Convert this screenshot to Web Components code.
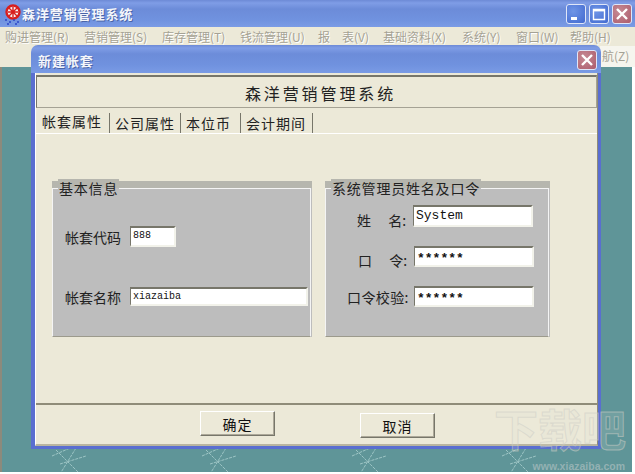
<!DOCTYPE html>
<html lang="zh">
<head>
<meta charset="utf-8">
<title>森洋营销管理系统</title>
<style>
  html, body { margin: 0; padding: 0; }
  body { width: 635px; height: 474px; overflow: hidden; background: #fff; font-family: "Noto Sans CJK SC", "Liberation Sans", sans-serif; }
</style>
</head>
<body>
<template id="title-bar-tpl">
  <style>
    :host { display: flex; align-items: center; height: var(--bar-h, 27px); box-sizing: border-box; padding: var(--bar-top, 0) var(--bar-right, 4px) 0 var(--bar-pad, 3px); gap: var(--bar-gap, 0); flex: none;
      background: linear-gradient(#6d8ad6 0, #7f9de6 3px, #6c8cd9 9px, #7092df 20px, #7a9be5 100%);
      border-radius: var(--bar-radius, 0); color: #f4f6fb; font-size: 13px; font-weight: 700; text-shadow: 1px 1px 0 #4a64a8; }
    .caption { flex: 1; letter-spacing: .9px; }
    .btns { display: flex; gap: 3px; }
  </style>
  <slot name="icon"></slot>
  <span class="caption"><slot></slot></span>
  <span class="btns"><slot name="buttons"></slot></span>
</template>

<template id="cap-button-tpl">
  <style>
    :host { display: block; width: 20px; height: 20px; box-sizing: border-box; border: 1px solid #dfe6f8; border-radius: 3px; }
    :host([kind="close"]) { background: radial-gradient(circle at 35% 35%, #c58a94, #ad5c6c); }
    :host([kind="min"]), :host([kind="max"]) { background: radial-gradient(circle at 35% 35%, #6f95e6, #4169d0); }
    svg { display: block; width: 18px; height: 18px; }
  </style>
  <svg viewBox="0 0 18 18"></svg>
</template>

<template id="menu-bar-tpl">
  <style>
    :host { display: flex; height: 19px; align-items: center; background: #ece9d8; color: #a5a294; font-size: 12px; line-height: 19px; padding-left: 5px; text-shadow: 1px 1px 0 #fff; white-space: nowrap; flex: none; }
    ::slotted(span) { margin-right: 13px; width: 65px; }
    ::slotted(span.short) { width: 41px; }
  </style>
  <slot></slot>
</template>

<template id="app-window-tpl">
  <style>
    :host { display: flex; flex-direction: column; position: relative; width: 635px; height: 474px; background: #fff; overflow: hidden; }
    .toolbar { height: 21px; flex: none; display: flex; justify-content: flex-end; background: #ece9d8; }
    .overflow { width: 35px; background: #f6f5ee; color: #a5a294; font-size: 12px; line-height: 19px; white-space: nowrap; box-sizing: border-box; padding-left: 2px; }
    .mdi { position: relative; flex: 1; margin: 0 3px 2px 0; border-left: 2px solid #8c8a7c; background: #5f9598; }
    svg.paper { position: absolute; inset: 0; width: 100%; height: 100%; }
  </style>
  <slot name="title"></slot>
  <slot name="menu"></slot>
  <div class="toolbar"><span class="overflow">航(Z)</span></div>
  <div class="mdi">
    <svg class="paper" aria-hidden="true">
      <defs>
        <pattern id="weave" width="150" height="150" patternUnits="userSpaceOnUse" x="-8" y="17">
          <g stroke="#9cc4c4" stroke-width="1" fill="none" stroke-dasharray="3 1">
            <path d="M62 66 84 88M82 64 66 90M58 72 76 64M66 80 92 72M88 62 96 64"/>
          </g>
        </pattern>
      </defs>
      <rect width="100%" height="100%" fill="url(#weave)"/>
    </svg>
  </div>
  <slot></slot>
</template>

<template id="dialog-window-tpl">
  <style>
    :host { display: flex; flex-direction: column; position: absolute; left: 31px; top: 45px; width: 570px; height: 404px; box-sizing: border-box;
      --bar-h: 28px; --bar-pad: 7px; --bar-radius: 7px 7px 0 0; --bar-top: 2px; --bar-right: 4px; }
    .body { flex: 1; display: flex; min-height: 0; border: solid #5a6ed0; border-width: 0 3px 3px 4px; }
    .inner { flex: 1; display: flex; flex-direction: column; min-width: 0; background: #ece9d8; padding-top: 2px; border-left: 1px solid #fff; border-right: 1px solid #8f8c79; border-bottom: 2px solid #b9b5a0; }
    .head { height: 33px; flex: none; box-sizing: border-box; border: solid; border-color: #77766a #a5a294 #a5a294 #77766a; border-width: 2px 1px 1px 1px; padding: 1px 0 0 8px; display: flex; align-items: center; justify-content: center; font-size: 16px; letter-spacing: 2.9px; color: #222; }
    .main { flex: 1; min-height: 0; }
    .foot { height: 41px; flex: none; border-top: 2px solid #8f8c79; box-sizing: border-box; display: flex; align-items: flex-start; padding: 6px 0 0 164px; gap: 85px; }
  </style>
  <slot name="title"></slot>
  <div class="body">
    <div class="inner">
      <div class="head"><slot name="heading"></slot></div>
      <div class="main"><slot></slot></div>
      <div class="foot"><slot name="actions"></slot></div>
    </div>
  </div>
</template>

<template id="tab-strip-tpl">
  <style>
    :host { display: flex; flex-direction: column; height: 100%; }
    .tabs { display: flex; height: 26px; box-sizing: border-box; flex: none; padding-left: 1px; border-bottom: 1px solid #fff; font-size: 14px; color: #222; }
    ::slotted(span) { padding: 0 6px 0 5px; border-right: 1px solid #77766a; margin-top: 5px; height: 20px; line-height: 20px; letter-spacing: 1px; }
    ::slotted(span.on) { line-height: 17px; }
    .panes { flex: 1; display: flex; gap: 13px; padding: 47px 0 0 16px; align-items: flex-start; }
  </style>
  <div class="tabs"><slot name="tab"></slot></div>
  <div class="panes"><slot></slot></div>
</template>

<template id="group-box-tpl">
  <style>
    :host { display: block; position: relative; box-sizing: border-box; width: var(--w); height: 156px; background: linear-gradient(#b6b6ae 7px, #bdbdbd 7px); font-size: 14px; color: #222; }
    .frame { position: absolute; inset: 7px 1px 0 0; border: 1px solid #f4f4f4; border-bottom-color: #9c9a8c; }
    .legend { position: absolute; left: 6px; top: -2px; padding: 0 1px; line-height: 18px; letter-spacing: .8px; white-space: nowrap; background: linear-gradient(#b6b6ae 9px, #bdbdbd 9px); }
    .rows { position: relative; display: flex; flex-direction: column; padding-top: var(--top); gap: var(--gap); }
  </style>
  <div class="frame"></div>
  <div class="legend"><slot name="legend"></slot></div>
  <div class="rows"><slot></slot></div>
</template>

<template id="text-field-tpl">
  <style>
    :host { display: flex; align-items: center; height: var(--h, 21px); }
    .label { width: var(--label-w); padding: var(--label-dy, 0) 0 0 var(--label-pad); box-sizing: border-box; white-space: pre; font-size: 14px; letter-spacing: var(--label-ls, 0); }
    .input { width: var(--input-w); height: var(--h, 21px); box-sizing: border-box; background: #fff; border: solid; border-color: #77766a #f2f2ea #f2f2ea #77766a; border-width: 2px 2px 2px 1px; font: var(--input-font, 10px/15px "Liberation Mono", monospace); color: #111; padding: var(--input-top, 0) 0 0 var(--input-left, 2px); overflow: hidden; white-space: pre; }
  </style>
  <span class="label"><slot name="label"></slot></span>
  <span class="input"><slot></slot></span>
</template>

<template id="push-button-tpl">
  <style>
    :host { display: flex; align-items: center; justify-content: center; width: 75px; height: 25px; box-sizing: border-box; background: #ece9d8; border: 1px solid; border-color: #fff #77766a #77766a #fff; box-shadow: inset -1px -1px 0 #aca899; font-size: 14px; color: #111; letter-spacing: 1px; }
    :host([low]) { margin-top: 2px; }
  </style>
  <slot></slot>
</template>

<template id="site-mark-tpl">
  <style>
    :host { position: absolute; left: 494px; top: 401px; width: 136px; height: 71px; pointer-events: none; font-family: "Noto Sans CJK SC", sans-serif; }
    .big { height: 54px; font-size: 44px; line-height: 54px; font-weight: 700; color: rgba(222,222,215,.18); -webkit-text-stroke: 1px rgba(205,205,198,.55); white-space: nowrap; }
    .url { margin-top: 5px; font: 700 10.5px/12px "Liberation Sans", sans-serif; color: rgba(215,215,215,.45); text-align: right; padding-right: 5px; }
  </style>
  <div class="big"><slot></slot></div>
  <div class="url"><slot name="url"></slot></div>
</template>

<app-window>
  <title-bar slot="title" style="--bar-right:3px;--bar-pad:3px;--bar-gap:0">
    <svg slot="icon" width="19" height="22" viewBox="0 0 19 22" aria-hidden="true">
      <circle cx="10" cy="9" r="6.5" fill="#f7f2f2" stroke="#d81e1e" stroke-width="2.4"/>
      <path d="M10 4v10M5 9h10M6 5l8 8M14 5l-8 8" stroke="#d81e1e" stroke-width="1.4"/>
      <path d="M2 17h2M6 19h2M10 17h2M14 19h2M4 21h2M12 21h2" stroke="#2b46c8" stroke-width="1.4"/>
    </svg>
    森洋营销管理系统
    <cap-button slot="buttons" kind="min"></cap-button>
    <cap-button slot="buttons" kind="max"></cap-button>
    <cap-button slot="buttons" kind="close"></cap-button>
  </title-bar>
  <menu-bar slot="menu">
    <span style="margin-right:14px">购进管理(R)</span><span style="margin-right:13px">营销管理(S)</span><span>库存管理(T)</span><span>钱流管理(U)</span><span style="width:52px">报&#x3000;表(V)</span><span style="width:66px">基础资料(X)</span><span class="short">系统(Y)</span><span class="short">窗口(W)</span><span class="short">帮助(H)</span>
  </menu-bar>

  <dialog-window>
    <title-bar slot="title">
      新建帐套
      <cap-button slot="buttons" kind="close"></cap-button>
    </title-bar>
    <span slot="heading">森洋营销管理系统</span>
    <tab-strip>
      <span slot="tab" class="on" style="padding-right:7px">帐套属性</span><span slot="tab" style="padding-right:5px">公司属性</span><span slot="tab" style="padding-right:9px">本位币</span><span slot="tab">会计期间</span>
      <group-box style="--w:260px;--top:45px;--gap:40px;--label-w:78px;--label-pad:13px">
        <span slot="legend">基本信息</span>
        <text-field style="--input-w:46px"><span slot="label">帐套代码</span>888</text-field>
        <text-field style="--input-w:178px;--h:19px;--input-font:10px/15px 'Liberation Mono',monospace"><span slot="label">帐套名称</span>xiazaiba</text-field>
      </group-box>
      <group-box style="--w:225px;--top:24px;--gap:19px;--label-w:89px;--label-pad:22px;--input-font:13px/17px 'Liberation Mono',monospace">
        <span slot="legend">系统管理员姓名及口令</span>
        <text-field style="--h:22px;--input-w:120px;--label-w:88px;--label-pad:32px;--label-dy:8px"><span slot="label">姓&#x3000;&nbsp;名:</span>System</text-field>
        <text-field style="--input-w:120px;--label-pad:33px;--label-dy:6px;--input-top:3px;--input-font:700 13px/15px 'Liberation Mono',monospace"><span slot="label">口&#x3000;&nbsp;令:</span>******</text-field>
        <text-field style="--input-w:120px;--label-ls:.4px;--input-top:3px;--input-font:700 13px/15px 'Liberation Mono',monospace"><span slot="label">口令校验:</span>******</text-field>
      </group-box>
    </tab-strip>
    <push-button slot="actions">确定</push-button>
    <push-button slot="actions" low>取消</push-button>
  </dialog-window>

  <site-mark>下载吧<span slot="url">www.xiazaiba.com</span></site-mark>
</app-window>

<script>
  // plain template-backed element, one per tag
  function simple(tag, tplId) {
    customElements.define(tag, class extends HTMLElement {
      constructor() {
        super();
        this.attachShadow({ mode: "open" });
        this.shadowRoot.append(document.getElementById(tplId).content.cloneNode(true));
      }
    });
  }

  class CapButton extends HTMLElement {
    constructor() {
      super();
      this.attachShadow({ mode: "open" });
      this.shadowRoot.append(document.getElementById("cap-button-tpl").content.cloneNode(true));
    }

    connectedCallback() {
      const glyphs = {
        min: '<rect x="4" y="12" width="6" height="3" fill="#fff"/>',
        max: '<path d="M3.5 4.5h11v10h-11z" fill="none" stroke="#fff" stroke-width="1.4"/><rect x="3" y="4" width="12" height="2.4" fill="#fff"/>',
        close: '<path d="M4 4 14 14M14 4 4 14" stroke="#fff" stroke-width="2.4"/>',
      };
      this.shadowRoot.querySelector("svg").innerHTML = glyphs[this.getAttribute("kind")];
    }
  }

  simple("title-bar", "title-bar-tpl");
  simple("menu-bar", "menu-bar-tpl");
  simple("app-window", "app-window-tpl");
  simple("dialog-window", "dialog-window-tpl");
  simple("tab-strip", "tab-strip-tpl");
  simple("group-box", "group-box-tpl");
  simple("text-field", "text-field-tpl");
  simple("push-button", "push-button-tpl");
  simple("site-mark", "site-mark-tpl");
  customElements.define("cap-button", CapButton);
</script>
</body>
</html>
